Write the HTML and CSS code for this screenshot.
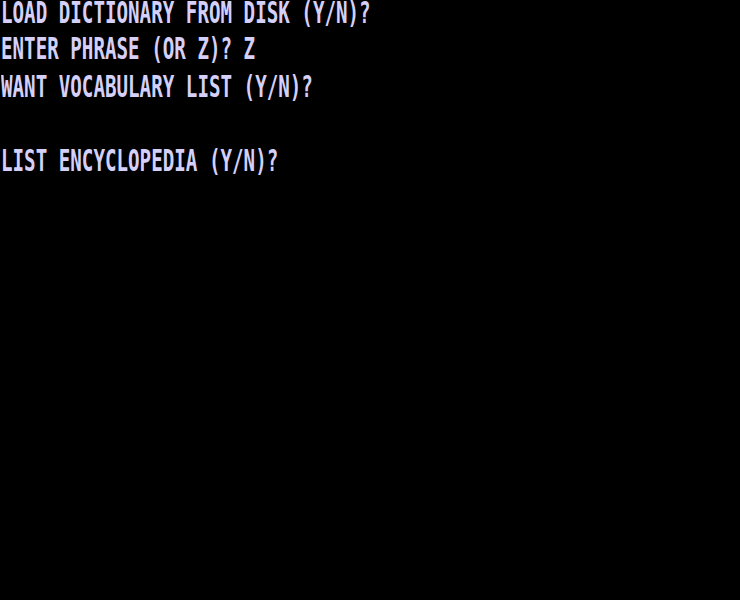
FILE: index.html
```html
<!DOCTYPE html>
<html>
<head>
<meta charset="utf-8">
<link rel="stylesheet" href="styles.css">
</head>
<body>
<div class="screen"><pre class="text">LOAD DICTIONARY FROM DISK (Y/N)?
ENTER PHRASE (OR Z)? Z
WANT VOCABULARY LIST (Y/N)?

LIST ENCYCLOPEDIA (Y/N)?</pre></div>
</body>
</html>
```
FILE: styles.css
```css
html, body {
  margin: 0;
  padding: 0;
  background: #000;
  width: 740px;
  height: 600px;
  overflow: hidden;
}
.screen {
  width: 740px;
  height: 600px;
  background: #000;
}
.text {
  margin: -5px 0 0 1px;
  font-family: "DejaVu Sans Mono", monospace;
  font-weight: bold;
  font-size: 19.2px;
  line-height: 23.4px;
  color: #d4d0fa;
  transform: scaleY(1.57);
  transform-origin: 0 0;
  white-space: pre;
}
```
